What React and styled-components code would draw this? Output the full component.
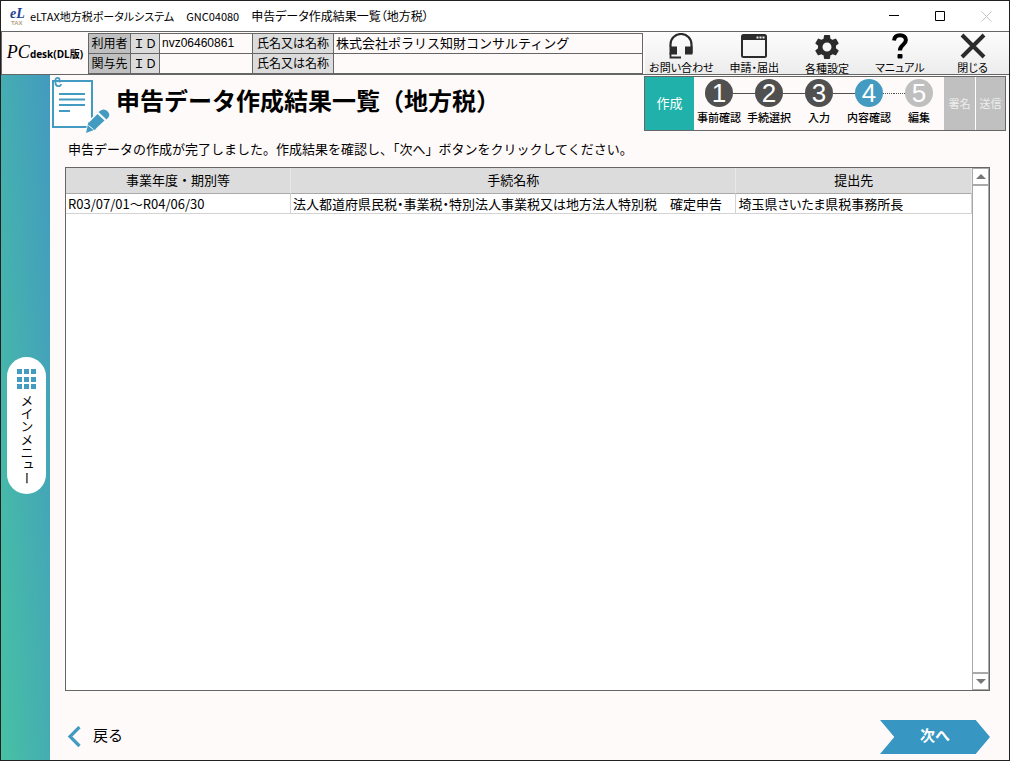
import React from "react";
import styled, { createGlobalStyle } from "styled-components";
import { MdSettings } from "react-icons/md";

const guideTools = [
  { label: "お問い合わせ", icon: <HeadsetIcon /> },
  { label: "申請・届出", icon: <WindowIcon /> },
  { label: "各種設定", icon: <MdSettings size={30} color="#2b2b2b" /> },
  { label: "マニュアル", icon: <QuestionIcon /> },
  { label: "閉じる", icon: <CrossIcon /> },
];

const steps = [
  { no: 1, label: "事前確認", color: "#505050" },
  { no: 2, label: "手続選択", color: "#505050" },
  { no: 3, label: "入力", color: "#505050" },
  { no: 4, label: "内容確認", color: "#439bc1" },
  { no: 5, label: "編集", color: "#bfbfbf" },
];

const rows = [
  {
    term: "R03/07/01～R04/06/30",
    name: "法人都道府県民税・事業税・特別法人事業税又は地方法人特別税　確定申告",
    office: "埼玉県さいたま県税事務所長",
  },
];

const App = () => {
  return (
    <Window>
      <GlobalStyle />
      <TitleBar>
        <TaxLogo />
        <TitleText>
          <small>eLTAX地方税ポータルシステム</small>
          <small>GNC04080</small>
          <span>申告データ作成結果一覧（地方税）</span>
        </TitleText>
        <WindowButton aria-label="最小化">
          <svg width="11" height="11" viewBox="0 0 11 11">
            <path d="M0 4.5h10" stroke="#000" />
          </svg>
        </WindowButton>
        <WindowButton aria-label="最大化">
          <svg width="11" height="11" viewBox="0 0 11 11">
            <path d="M.5.5h9v9h-9z" stroke="#000" fill="none" />
          </svg>
        </WindowButton>
        <WindowButton aria-label="ウィンドウを閉じる" disabled>
          <svg width="11" height="11" viewBox="0 0 11 11">
            <path d="M.5.5l10 10M10.5.5l-10 10" stroke="#c4c4c4" />
          </svg>
        </WindowButton>
      </TitleBar>

      <Header>
        <Brand>
          <em>PC</em>
          <strong>desk(DL版)</strong>
        </Brand>
        <UserTable>
          <tbody>
            <tr>
              <UserHead $w="42px" $dark>利用者</UserHead>
              <UserHead $w="29px">ＩＤ</UserHead>
              <UserCell $w="93px">nvz06460861</UserCell>
              <UserHead $w="81px">氏名又は名称</UserHead>
              <UserCell $name>株式会社ポラリス知財コンサルティング</UserCell>
            </tr>
            <tr>
              <UserHead $dark>関与先</UserHead>
              <UserHead>ＩＤ</UserHead>
              <UserCell />
              <UserHead>氏名又は名称</UserHead>
              <UserCell $name />
            </tr>
          </tbody>
        </UserTable>
        <Tools>
          {guideTools.map(({ label, icon }) => (
            <ToolButton key={label}>
              <ToolIcon>{icon}</ToolIcon>
              {label}
            </ToolButton>
          ))}
        </Tools>
      </Header>

      <Body>
        <Sidebar>
          <MenuButton>
            <svg width="19" height="21" viewBox="0 0 19 21" fill="#439bc1">
              {[0, 7, 14].map((x) =>
                [0, 8, 15].map((y) => (
                  <rect key={`${x}-${y}`} x={x} y={y} width="5" height="5" />
                ))
              )}
            </svg>
            <span>メインメニュー</span>
          </MenuButton>
        </Sidebar>

        <Main>
          <Heading>
            <DocumentIcon />
            <h1>申告データ作成結果一覧（地方税）</h1>
            <Progress>
              <Phase $active>作成</Phase>
              <StepList>
                {steps.map(({ no, label, color }) => (
                  <Step key={no}>
                    <StepMark>
                      <Connector $type={no === 1 ? "none" : no === 5 ? "dotted" : "solid"} />
                      <Circle $color={color}>{no}</Circle>
                      <Connector $type={no === 5 ? "none" : no === 4 ? "dotted" : "solid"} />
                    </StepMark>
                    <span>{label}</span>
                  </Step>
                ))}
              </StepList>
              <Phase>署名</Phase>
              <Phase>送信</Phase>
            </Progress>
          </Heading>

          <Content>
            <Message>
              申告データの作成が完了しました。作成結果を確認し、「次へ」ボタンをクリックしてください。
            </Message>
            <ResultFrame>
              <ResultArea>
                <ResultTable>
                  <thead>
                    <tr>
                      <th>事業年度・期別等</th>
                      <th>手続名称</th>
                      <th>提出先</th>
                    </tr>
                  </thead>
                  <tbody>
                    {rows.map(({ term, name, office }) => (
                      <tr key={term}>
                        <td>{term}</td>
                        <td>{name}</td>
                        <td>{office}</td>
                      </tr>
                    ))}
                  </tbody>
                </ResultTable>
              </ResultArea>
              <ScrollBar>
                <ScrollButton aria-label="上へスクロール">
                  <svg width="10" height="5" viewBox="0 0 10 5">
                    <path d="M0 5L5 0l5 5z" fill="#777" />
                  </svg>
                </ScrollButton>
                <ScrollButton aria-label="下へスクロール">
                  <svg width="10" height="5" viewBox="0 0 10 5">
                    <path d="M0 0l5 5 5-5z" fill="#777" />
                  </svg>
                </ScrollButton>
              </ScrollBar>
            </ResultFrame>
            <Footer>
              <BackButton>
                <svg width="14" height="22" viewBox="0 0 14 22">
                  <path d="M12.500 1L3 10.500l9.500 9.500" fill="none" stroke="#439bc1" strokeWidth="3.200" />
                </svg>
                <span>戻る</span>
              </BackButton>
              <NextButton>次へ</NextButton>
            </Footer>
          </Content>
        </Main>
      </Body>
    </Window>
  );
};

export default App;

function TaxLogo() {
  return (
    <svg width="18" height="18" viewBox="0 0 18 18" role="img" aria-label="eLTAX">
      <text x="2" y="11" fontFamily="Liberation Serif, serif" fontSize="14" fontStyle="italic" fontWeight="700" fill="#1d3f94">
        eL
      </text>
      <text x="3" y="18" fontFamily="Liberation Sans, sans-serif" fontSize="6" fontWeight="700" fill="#b3a184">
        TAX
      </text>
    </svg>
  );
}

function HeadsetIcon() {
  return (
    <svg width="24" height="26" viewBox="0 0 24 26">
      <path d="M1.500 14v-2.500a10.500 10.500 0 0 1 21 0V20" fill="none" stroke="#2b2b2b" strokeWidth="2.200" />
      <path d="M.5 13.500h7.500v8H.5zM16 13.500h7.500v8H16z" fill="#2b2b2b" />
      <path d="M1.500 20v4.500H12" fill="none" stroke="#2b2b2b" strokeWidth="1.800" />
    </svg>
  );
}

function WindowIcon() {
  return (
    <svg width="26" height="24" viewBox="0 0 26 24">
      <rect x="1" y="1" width="24" height="22" rx="1.500" fill="none" stroke="#2b2b2b" strokeWidth="2" />
      <path d="M1 1h24v5H1z" fill="#2b2b2b" />
      <path d="M15.500 2.500h2v2h-2zM18.500 2.500h2v2h-2zM21.500 2.500h2v2h-2z" fill="#eee" />
    </svg>
  );
}

function QuestionIcon() {
  return (
    <svg width="18" height="26" viewBox="0 0 18 26">
      <path d="M3 7.500C3.300 4 5.500 2.200 9 2.200c3.700 0 5.900 1.900 5.900 4.900 0 4.800-6 4.600-6 10.400" fill="none" stroke="#000" strokeWidth="4" />
      <rect x="6.500" y="21" width="5" height="4.500" rx="1" fill="#000" />
    </svg>
  );
}

function CrossIcon() {
  return (
    <svg width="26" height="26" viewBox="0 0 26 26">
      <path d="M2 2l22 22M24 2L2 24" stroke="#2b2b2b" strokeWidth="4" />
    </svg>
  );
}

function DocumentIcon() {
  return (
    <svg width="58" height="58" viewBox="0 0 58 58">
      <path d="M1 5h39v46H1z" fill="#fff" stroke="#439bc1" strokeWidth="2" />
      <path d="M7 18h26M7 23.500h26M7 29h26M7 35h11" stroke="#439bc1" strokeWidth="2" />
      <path d="M7.500 6.500V3.800c0-2.600-4-2.600-4 0V7c0 4 5.500 4 5.500 1" fill="none" stroke="#439bc1" strokeWidth="1.800" />
      <path d="M34 57l2.500-11 9-9 8 7.500-9 8.500z" fill="#439bc1" stroke="#fffafa" strokeWidth="1.500" />
      <path d="M46.500 36l2.500-1.800q3.500-2 6.500 1t1 6l-2 2.300z" fill="#439bc1" />
      <path d="M34 57l2.500-11 8 7z" fill="#439bc1" />
      <path d="M36.500 49.500l5 4" stroke="#fffafa" strokeWidth="1" />
    </svg>
  );
}

const GlobalStyle = createGlobalStyle`
  * {
    box-sizing: border-box;
  }

  body {
    margin: 0;
    color: #000;
    font-family: "Noto Sans CJK JP", sans-serif;
    font-size: 12px;
  }

  button {
    margin: 0;
    padding: 0;
    border: 0;
    background: none;
    color: inherit;
    font: inherit;
  }

  svg {
    display: block;
    flex: none;
  }
`;

const Window = styled.div`
  min-height: 100vh;
  display: flex;
  flex-direction: column;
  border: 1px solid #231f20;
  background: #fffafa;
`;

const TitleBar = styled.div`
  height: 30px;
  display: flex;
  align-items: center;
  padding-left: 7px;
  background: #fff;
`;

const TitleText = styled.div`
  flex: 1;
  display: flex;
  align-items: baseline;
  gap: 12px;
  padding: 0 0 2px 4px;
  white-space: nowrap;
  font-feature-settings: "palt";

  small {
    font-size: 11px;
  }
`;

const WindowButton = styled.button`
  width: 46px;
  height: 30px;
  display: flex;
  align-items: center;
  justify-content: center;
`;

const Header = styled.header`
  height: 44px;
  display: flex;
  border: 1px solid #666;
  border-right: 0;
`;

const Brand = styled.div`
  width: 86px;
  display: flex;
  align-items: baseline;
  justify-content: center;
  line-height: 40px;
  white-space: nowrap;

  em {
    font-family: "Liberation Serif", serif;
    font-size: 18px;
  }

  strong {
    font-family: "Open Sans", "Noto Sans CJK JP", sans-serif;
    font-size: 10px;
  }
`;

const UserTable = styled.table`
  flex: 1;
  height: 40px;
  margin: 1px 2px 1px 0;
  border-collapse: collapse;
  table-layout: fixed;
`;

const UserHead = styled.th`
  width: ${({ $w }) => $w};
  height: 20px;
  padding: 0 0 2px;
  border: 1px solid #666;
  background: ${({ $dark }) => ($dark ? "#c0c0c0" : "#dcdcdc")};
  font-weight: 400;
  line-height: 17px;
  white-space: nowrap;
`;

const UserCell = styled.td`
  width: ${({ $w }) => $w};
  height: 20px;
  padding: 0 2px 1px;
  border: 1px solid #666;
  font-family: "Liberation Sans", "Noto Sans CJK JP", sans-serif;
  font-size: ${({ $name }) => ($name ? "13px" : "12px")};
  line-height: 17px;
  white-space: nowrap;
`;

const Tools = styled.nav`
  width: 364px;
  display: flex;
  background: linear-gradient(#fdfdfd, #ececec);
`;

const ToolButton = styled.button`
  flex: 1;
  display: flex;
  flex-direction: column;
  align-items: center;
  font-size: 11px;
  line-height: 14px;
  white-space: nowrap;
  font-feature-settings: "palt";
`;

const ToolIcon = styled.span`
  height: 29px;
  display: flex;
  align-items: center;
`;

const Body = styled.div`
  flex: 1;
  display: flex;
`;

const Sidebar = styled.aside`
  width: 49px;
  display: flex;
  align-items: center;
  justify-content: center;
  padding: 16px 0 0 2px;
  background: linear-gradient(to top right, #47c1a4, #439abf);
`;

const MenuButton = styled.button`
  width: 39px;
  height: 137px;
  display: flex;
  flex-direction: column;
  align-items: center;
  padding-top: 12px;
  gap: 4px;
  border-radius: 20px;
  background: #fff;

  span {
    font-size: 13px;
    line-height: 14px;
    writing-mode: vertical-rl;
  }
`;

const Main = styled.main`
  flex: 1;
  min-width: 0;
  display: flex;
  flex-direction: column;
`;

const Heading = styled.div`
  height: 56px;
  display: flex;
  align-items: flex-start;
  padding: 1px 3px 0 2px;

  h1 {
    flex: 1;
    margin: 0;
    padding-left: 6px;
    font-size: 24px;
    line-height: 48px;
    white-space: nowrap;
  }
`;

const Progress = styled.div`
  height: 55px;
  display: flex;
  border: 1px solid #666;
`;

const Phase = styled.div`
  width: ${({ $active }) => ($active ? "49px" : "31px")};
  display: flex;
  align-items: center;
  justify-content: center;
  padding-bottom: 2px;
  background: ${({ $active }) => ($active ? "#20b2aa" : "#c0c0c0")};
  color: ${({ $active }) => ($active ? "#fff" : "#eee")};
  font-size: ${({ $active }) => ($active ? "13px" : "11px")};

  & + & {
    width: 30px;
    border-left: 1px solid #fff;
  }
`;

const StepList = styled.ol`
  display: flex;
  margin: 0;
  padding: 0;
  list-style: none;
`;

const Step = styled.li`
  width: 50px;
  display: flex;
  flex-direction: column;
  align-items: center;
  padding-top: 2px;
  font-size: 11px;
  font-weight: 500;
  line-height: 20px;
`;

const StepMark = styled.div`
  width: 100%;
  display: flex;
  align-items: center;
`;

const Connector = styled.i`
  flex: 1;
  border-top: 1px ${({ $type }) => $type} #505050;
`;

const Circle = styled.span`
  width: 28px;
  height: 28px;
  border-radius: 50%;
  background: ${({ $color }) => $color};
  color: #fff;
  font-family: "Liberation Sans", sans-serif;
  font-size: 26px;
  font-weight: 400;
  line-height: 28px;
  text-align: center;
`;

const Content = styled.div`
  flex: 1;
  display: flex;
  flex-direction: column;
  padding: 0 19px 6px 15px;
`;

const Message = styled.p`
  margin: 0;
  padding: 8px 3px;
  font-size: 13px;
  line-height: 20px;
`;

const ResultFrame = styled.div`
  flex: 1;
  display: flex;
  border: 1px solid #666;
  background: #fff;
`;

const ResultArea = styled.div`
  flex: 1;
  min-width: 0;
`;

const ResultTable = styled.table`
  width: 100%;
  border-collapse: separate;
  border-spacing: 0;
  table-layout: fixed;

  th {
    height: 26px;
    padding: 0 0 2px;
    border-right: 1px solid #e8e8e8;
    border-bottom: 1px solid #a9a9a9;
    background: #dcdcdc;
    font-size: 13px;
    font-weight: 400;
    line-height: 20px;
  }

  th:first-child {
    width: 225px;
  }

  th:last-child {
    width: 26%;
  }

  td {
    height: 20px;
    padding: 0 2px;
    border-right: 1px solid #d3d3d3;
    border-bottom: 1px solid #d3d3d3;
    font-size: 13px;
    font-feature-settings: "palt";
    line-height: 18px;
    white-space: nowrap;
  }
`;

const ScrollBar = styled.div`
  width: 17px;
  display: flex;
  flex-direction: column;
  justify-content: space-between;
  border: 1px solid #a9a9a9;
`;

const ScrollButton = styled.button`
  height: 17px;
  display: flex;
  align-items: center;
  justify-content: center;
  border-bottom: 2px solid #a9a9a9;

  & + & {
    border-top: 2px solid #a9a9a9;
    border-bottom: 0;
  }
`;

const Footer = styled.footer`
  display: flex;
  align-items: center;
  justify-content: space-between;
  padding-top: 29px;
`;

const BackButton = styled.button`
  display: flex;
  align-items: center;
  gap: 12px;
  padding-left: 2px;
  font-size: 15px;
  line-height: 22px;

  span {
    padding-bottom: 5px;
  }
`;

const NextButton = styled.button`
  width: 110px;
  height: 34px;
  padding-bottom: 5px;
  background: #3896c3;
  clip-path: polygon(0 0, 87% 0, 100% 50%, 87% 100%, 0 100%, 13% 50%);
  color: #fff;
  font-size: 15px;
  font-weight: 700;
`;
